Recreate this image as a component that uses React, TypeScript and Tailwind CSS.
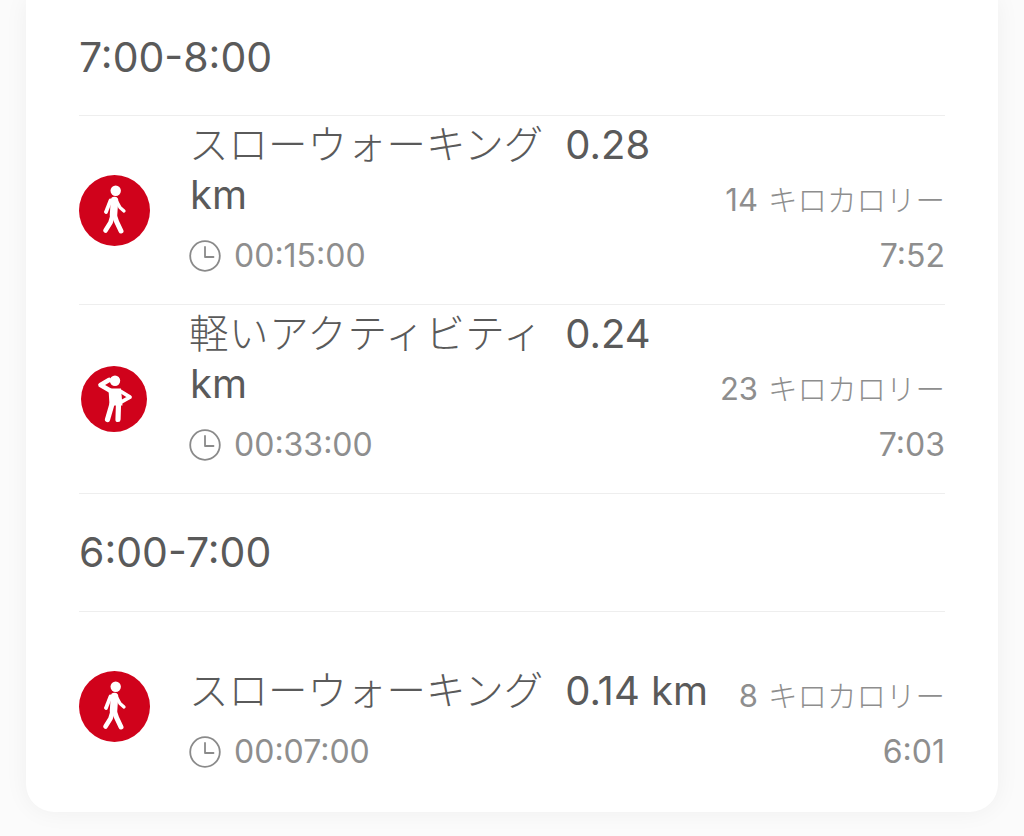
import * as React from 'react'

function Walker() {
  return (
    <svg viewBox="0 0 71 71" className="h-[71px] w-[71px] shrink-0" aria-hidden="true">
      <circle cx="35.5" cy="35.5" r="35.5" fill="#d0021b" />
      <circle cx="36.7" cy="15.7" r="5.2" fill="#fff" />
      <g fill="none" stroke="#fff" strokeLinecap="round" strokeLinejoin="round">
        <path d="M31.500 25.500L27 37" strokeWidth="3.800" />
        <path d="M37 25l4 7.500 4 3.500" strokeWidth="3.300" />
        <path d="M35.500 25.500L34.500 40" strokeWidth="7.500" />
        <path d="M33.500 41l-2 6.500-5 8" strokeWidth="4.600" />
        <path d="M35 39l2.500 7.500 4.500 9.500" strokeWidth="5" />
      </g>
    </svg>
  )
}

function Stretcher() {
  return (
    <svg viewBox="0 0 66 66" className="-ml-[1px] h-[66px] w-[66px] shrink-0" aria-hidden="true">
      <circle cx="33" cy="33" r="33" fill="#d0021b" />
      <circle cx="34" cy="14.700" r="5.200" fill="#fff" />
      <path d="M27.500 22.500h12.500l1.500 17H28.500z" fill="#fff" />
      <g fill="none" stroke="#fff" strokeLinecap="round" strokeLinejoin="round">
        <path d="M28 14L19.500 19l9.500 5.500" strokeWidth="4.600" />
        <path d="M40 25.500l9 5.700-9 5" strokeWidth="3.800" />
        <path d="M31 38l-4.500 15.500" strokeWidth="5.200" />
        <path d="M37.500 38l-.5 15.500" strokeWidth="5.200" />
      </g>
    </svg>
  )
}

function ClockIcon() {
  return (
    <svg viewBox="0 0 32 32" className="-ml-[1px] h-8 w-8 shrink-0" fill="none" stroke="#8a8a8a" strokeWidth="1.800" aria-hidden="true">
      <circle cx="16" cy="16" r="14.800" />
      <path d="M16 7v10h8.500" strokeLinecap="round" strokeLinejoin="round" />
    </svg>
  )
}

type RowProps = {
  icon: React.ReactNode
  title: string
  distance: string
  duration: string
  kcal: number
  time: string
  wide?: boolean
  last?: boolean
}

function ActivityRow({ icon, title, distance, duration, kcal, time, wide, last }: RowProps) {
  return (
    <div className={last ? 'flex h-[189px] gap-6' : 'flex h-[189px] gap-6 border-b border-[#eeeeee]'}>
      <div className="flex min-w-0 flex-1 items-center">
        <div className="flex w-[111px] shrink-0">
          <div className="flex w-[71px] justify-center">{icon}</div>
        </div>
        <div className={last ? 'min-w-0 flex-1 self-start pt-[54px]' : 'min-w-0 flex-1 self-start pt-[4px]'}>
          <div className="text-[40px] leading-[50px] text-[#5a5a5a]">
            <span className={wide ? '-ml-[1px] mr-[22px] text-[39.5px] font-light tracking-[0.6px]' : '-ml-[1px] mr-[22px] text-[39.5px] font-light'}>{title}</span>
            {distance}
          </div>
          <div className="mt-[16px] flex h-10 items-center gap-[13px] text-[32px] text-[#8e8e8e]">
            <ClockIcon />
            {duration}
          </div>
        </div>
      </div>
      <div className={last ? 'shrink-0 self-end pb-[29px] text-right text-[#8e8e8e]' : 'shrink-0 self-end pb-[28px] text-right text-[#8e8e8e]'}>
        <div className="flex h-10 items-center justify-end gap-[10px] text-[29.5px] font-light">
          <span className="text-[31px] font-normal">{kcal}</span>
          <span>キロカロリー</span>
        </div>
        <div className="mt-[16px] flex h-10 items-center justify-end text-[32px]">{time}</div>
      </div>
    </div>
  )
}

function SectionHeader({ label, height }: { label: string; height: string }) {
  return (
    <div className={`${height} flex items-center border-b border-[#eeeeee] text-[41px] text-[#5a5a5a]`}>
      {label}
    </div>
  )
}

export default function App() {
  return (
    <div className="h-[836px] w-[1024px] overflow-hidden bg-[#fbfbfb] px-[26px] font-['Inter','Noto_Sans_CJK_JP',sans-serif]">
      <div className="h-[812px] rounded-b-[28px] bg-white px-[53px] shadow-[0_0_24px_rgba(0,0,0,0.05)]">
        <SectionHeader label="7:00-8:00" height="h-[116px]" />
        <ActivityRow icon={<Walker />} title="スローウォーキング" distance="0.28 km" duration="00:15:00" kcal={14} time="7:52" />
        <ActivityRow icon={<Stretcher />} title="軽いアクティビティ" distance="0.24 km" duration="00:33:00" kcal={23} time="7:03" wide />
        <SectionHeader label="6:00-7:00" height="h-[118px]" />
        <ActivityRow icon={<Walker />} title="スローウォーキング" distance="0.14 km" duration="00:07:00" kcal={8} time="6:01" last />
      </div>
    </div>
  )
}
